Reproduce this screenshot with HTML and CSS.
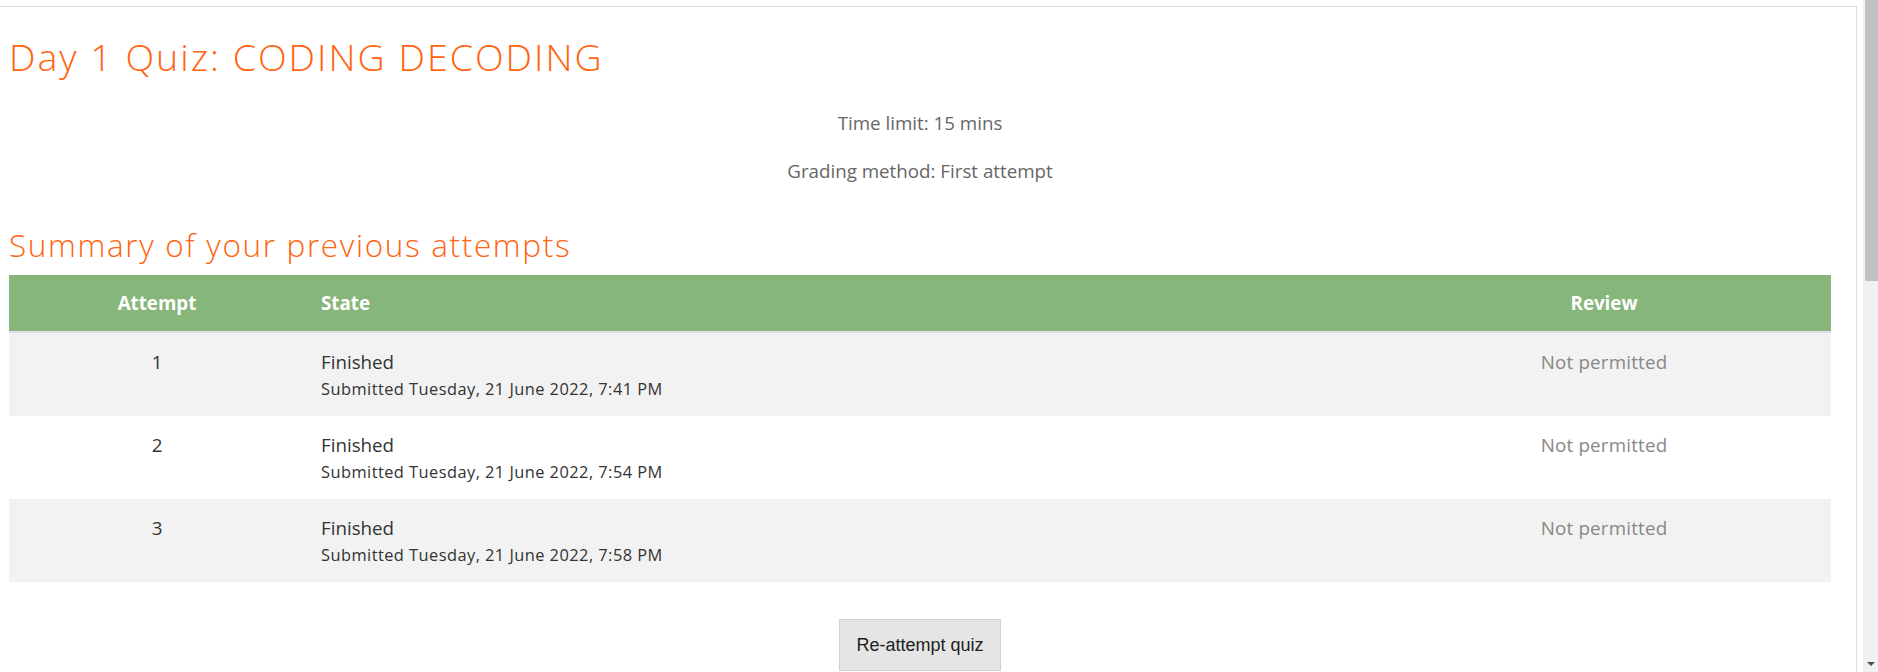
FILE: index.html
```html
<!DOCTYPE html>
<html lang="en">
<head>
<meta charset="utf-8">
<title>Day 1 Quiz: CODING DECODING</title>
<link rel="stylesheet" href="styles.css">
</head>
<body>
<div class="window">
  <div class="viewport">
    <div class="region">
      <div class="content">
        <h2 class="quiz-title">Day 1 Quiz: CODING DECODING</h2>
        <div class="quizinfo">
          <p>Time limit: 15 mins</p>
          <p>Grading method: First attempt</p>
        </div>
        <h3 class="summary-title">Summary of your previous attempts</h3>
        <table class="attempts">
          <colgroup>
            <col class="c-attempt">
            <col class="c-state">
            <col class="c-review">
          </colgroup>
          <thead>
            <tr>
              <th class="center">Attempt</th>
              <th class="left">State</th>
              <th class="center">Review</th>
            </tr>
          </thead>
          <tbody>
            <tr>
              <td class="center">1</td>
              <td class="left">Finished<span class="statedetails">Submitted Tuesday, 21 June 2022, 7:41 PM</span></td>
              <td class="center muted">Not permitted</td>
            </tr>
            <tr>
              <td class="center">2</td>
              <td class="left">Finished<span class="statedetails">Submitted Tuesday, 21 June 2022, 7:54 PM</span></td>
              <td class="center muted">Not permitted</td>
            </tr>
            <tr>
              <td class="center">3</td>
              <td class="left">Finished<span class="statedetails">Submitted Tuesday, 21 June 2022, 7:58 PM</span></td>
              <td class="center muted">Not permitted</td>
            </tr>
          </tbody>
        </table>
        <div class="actions">
          <button class="btn" type="button">Re-attempt quiz</button>
        </div>
      </div>
    </div>
  </div>
  <div class="scrollbar">
    <div class="thumb"></div>
    <div class="arrow"></div>
  </div>
</div>
</body>
</html>
```

FILE: styles.css
```css
html, body {
  margin: 0;
  padding: 0;
  height: 672px;
  overflow: hidden;
  background: #ffffff;
}

body {
  font-family: "Open Sans", "Liberation Sans", sans-serif;
  font-size: 18.75px;
  line-height: 1.5;
  color: #333333;
}

.window {
  display: flex;
  height: 672px;
}

.viewport {
  flex: 1;
  padding-top: 6px;
  padding-right: 6px;
  overflow: hidden;
}

.region {
  border-top: 1px solid #dcdcdc;
  border-right: 1px solid #dcdcdc;
  height: 800px;
}

.content {
  padding: 27px 25px 0 9px;
}

.quiz-title {
  margin: 0;
  font-size: 37.5px;
  font-weight: 300;
  line-height: 45px;
  color: #ff6410;
  letter-spacing: 2px;
}

.quizinfo {
  margin-top: 30px;
  text-align: center;
  color: #666666;
}

.quizinfo p {
  margin: 0 0 20px 0;
  line-height: 28px;
}

.summary-title {
  margin: 41px 0 11px 0;
  font-size: 31.5px;
  font-weight: 300;
  line-height: 38px;
  color: #ff6410;
  letter-spacing: 1.65px;
}

.attempts {
  width: 100%;
  border-collapse: collapse;
  table-layout: fixed;
}

.c-attempt { width: 296px; }
.c-review { width: 454px; }

.attempts th {
  background: #87b67b;
  color: #ffffff;
  font-weight: 700;
  line-height: 28px;
  padding: 14px 16px;
  border-bottom: 2px solid #dee2e6;
}

.attempts td {
  padding: 15px 16px 15px 16px;
  line-height: 28px;
  vertical-align: top;
  height: 53px;
}

.attempts tbody tr:nth-child(odd) td {
  background: #f2f2f2;
}

.center { text-align: center; }
.left { text-align: left; }

.muted {
  color: #888888;
  letter-spacing: 0.2px;
}

.statedetails {
  display: block;
  font-size: 16.4px;
  line-height: 25px;
  letter-spacing: 0.45px;
}

.actions {
  margin-top: 37px;
  display: flex;
  justify-content: center;
}

.btn {
  font-family: "Liberation Sans", Arial, sans-serif;
  font-size: 18px;
  color: #1e1e1e;
  background: #e5e5e5;
  border: 1px solid #cfd3d9;
  border-radius: 0;
  padding: 14px 16px;
  line-height: 22px;
}

.scrollbar {
  width: 15px;
  flex: none;
  background: #f1f1f1;
  display: flex;
  flex-direction: column;
  align-items: center;
}

.thumb {
  width: 13px;
  height: 281px;
  background: #c1c1c1;
  margin-left: 2px;
}

.arrow {
  margin-top: auto;
  margin-bottom: 6px;
  width: 0;
  height: 0;
  border-left: 4px solid transparent;
  border-right: 4px solid transparent;
  border-top: 4px solid #505050;
}
```
